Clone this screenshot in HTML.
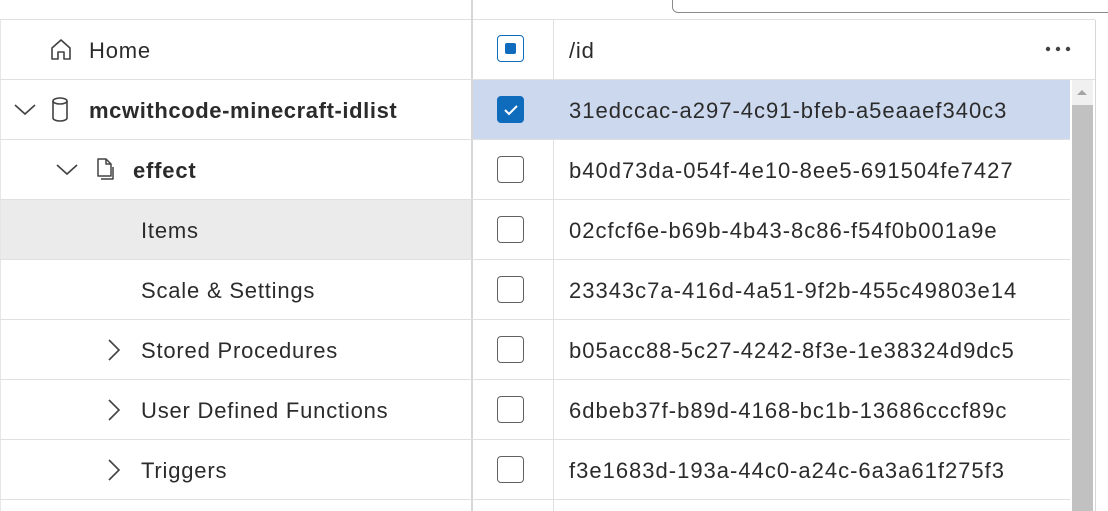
<!DOCTYPE html><html><head><style>
body{margin:0;width:1108px;height:511px;overflow:hidden;background:#fff;font-family:"Liberation Sans",sans-serif;color:#2b2b2b;position:relative}
.a{position:absolute}
.t{font-size:22px;line-height:62px;white-space:nowrap;letter-spacing:0.8px}
.hl{height:1px;background:#e0e0e0}
.cb{position:absolute;left:497px;width:27px;height:27px;border:1px solid #616161;border-radius:4px;box-sizing:border-box;background:#fff}
</style></head><body>
<div class="a" style="left:672px;top:-10px;width:460px;height:21px;border:1px solid #8a8a8a;border-radius:6px"></div>
<div class="a hl" style="left:0;top:19px;width:1095px"></div>
<div class="a" style="left:0;top:20px;width:1px;height:491px;background:#e6e6e6"></div>
<div class="a" style="left:471px;top:0;width:2px;height:511px;background:#d6d6d6"></div>
<div class="a" style="left:553px;top:20px;width:1px;height:491px;background:#e0e0e0"></div>
<div class="a" style="left:1095px;top:20px;width:1px;height:491px;background:#d6d6d6"></div>
<div class="a" style="left:473px;top:80px;width:597px;height:60px;background:#cbd8ed"></div>
<div class="a" style="left:1px;top:200px;width:470px;height:60px;background:#ebebeb"></div>
<div class="a hl" style="left:0;top:79px;width:1095px"></div>
<div class="a hl" style="left:0;top:139px;width:1070px"></div>
<div class="a hl" style="left:0;top:199px;width:1070px"></div>
<div class="a hl" style="left:0;top:259px;width:1070px"></div>
<div class="a hl" style="left:0;top:319px;width:1070px"></div>
<div class="a hl" style="left:0;top:379px;width:1070px"></div>
<div class="a hl" style="left:0;top:439px;width:1070px"></div>
<div class="a hl" style="left:0;top:499px;width:1070px"></div>
<div class="a" style="left:1072px;top:80px;width:21px;height:431px;background:#f0f0f0"></div>
<div class="a" style="left:1072px;top:105px;width:21px;height:406px;background:#c1c1c1"></div>
<svg class="a" style="left:1076px;top:88px" width="12" height="8"><path d="M1 7L6 2L11 7Z" fill="#a3a3a3"/></svg>
<svg class="a" style="left:48px;top:37px" width="26" height="26" fill="none" stroke="#424242" stroke-width="1.6" stroke-linejoin="round"><path d="M4 11L13 3L22 11V22H16V15H10V22H4Z"/></svg>
<div class="a t" style="left:89px;top:20px">Home</div>
<svg class="a" style="left:12px;top:100px" width="26" height="20" fill="none" stroke="#424242" stroke-width="1.6"><path d="M3 5L13 14L23 5"/></svg>
<svg class="a" style="left:50px;top:96px" width="20" height="28" fill="none" stroke="#424242" stroke-width="1.6"><ellipse cx="10" cy="5" rx="7" ry="3"/><path d="M3 5V22A7 3 0 0 0 17 22V5"/></svg>
<div class="a t" style="left:89px;top:80px;font-weight:bold;letter-spacing:0.6px">mcwithcode-minecraft-idlist</div>
<svg class="a" style="left:54px;top:160px" width="26" height="20" fill="none" stroke="#424242" stroke-width="1.6"><path d="M3 5L13 14L23 5"/></svg>
<svg class="a" style="left:95px;top:156px" width="22" height="28" fill="none" stroke="#424242" stroke-width="1.5" stroke-linejoin="round"><path d="M3 3H11L16 8V20H3Z"/><path d="M11 3V8H16"/><path d="M6 23H18V11"/></svg>
<div class="a t" style="left:133px;top:140px;font-weight:bold">effect</div>
<div class="a t" style="left:141px;top:200px">Items</div>
<div class="a t" style="left:141px;top:260px">Scale &amp; Settings</div>
<svg class="a" style="left:106px;top:337px" width="16" height="26" fill="none" stroke="#424242" stroke-width="1.6"><path d="M3 3L13 13L3 23"/></svg>
<div class="a t" style="left:141px;top:320px">Stored Procedures</div>
<svg class="a" style="left:106px;top:397px" width="16" height="26" fill="none" stroke="#424242" stroke-width="1.6"><path d="M3 3L13 13L3 23"/></svg>
<div class="a t" style="left:141px;top:380px">User Defined Functions</div>
<svg class="a" style="left:106px;top:457px" width="16" height="26" fill="none" stroke="#424242" stroke-width="1.6"><path d="M3 3L13 13L3 23"/></svg>
<div class="a t" style="left:141px;top:440px">Triggers</div>
<div class="cb" style="top:35px;border-color:#0f6cbd"><div class="a" style="left:7px;top:7px;width:11px;height:11px;background:#0f6cbd;border-radius:2px"></div></div>
<div class="a t" style="left:569px;top:20px">/id</div>
<svg class="a" style="left:1045px;top:45px" width="28" height="8" fill="#424242"><circle cx="3" cy="4" r="2.2"/><circle cx="13" cy="4" r="2.2"/><circle cx="23" cy="4" r="2.2"/></svg>
<div class="cb" style="top:96px;background:#0f6cbd;border-color:#0f6cbd"><svg class="a" style="left:5px;top:6px" width="16" height="14" fill="none" stroke="#fff" stroke-width="2"><path d="M2 7L6 11L14 3"/></svg></div>
<div class="a t" style="left:569px;top:80px;letter-spacing:1px">31edccac-a297-4c91-bfeb-a5eaaef340c3</div>
<div class="cb" style="top:156px"></div><div class="a t" style="left:569px;top:140px;letter-spacing:1px">b40d73da-054f-4e10-8ee5-691504fe7427</div>
<div class="cb" style="top:216px"></div><div class="a t" style="left:569px;top:200px;letter-spacing:1px">02cfcf6e-b69b-4b43-8c86-f54f0b001a9e</div>
<div class="cb" style="top:276px"></div><div class="a t" style="left:569px;top:260px;letter-spacing:1px">23343c7a-416d-4a51-9f2b-455c49803e14</div>
<div class="cb" style="top:336px"></div><div class="a t" style="left:569px;top:320px;letter-spacing:1px">b05acc88-5c27-4242-8f3e-1e38324d9dc5</div>
<div class="cb" style="top:396px"></div><div class="a t" style="left:569px;top:380px;letter-spacing:1px">6dbeb37f-b89d-4168-bc1b-13686cccf89c</div>
<div class="cb" style="top:456px"></div><div class="a t" style="left:569px;top:440px;letter-spacing:1px">f3e1683d-193a-44c0-a24c-6a3a61f275f3</div>
</body></html>
